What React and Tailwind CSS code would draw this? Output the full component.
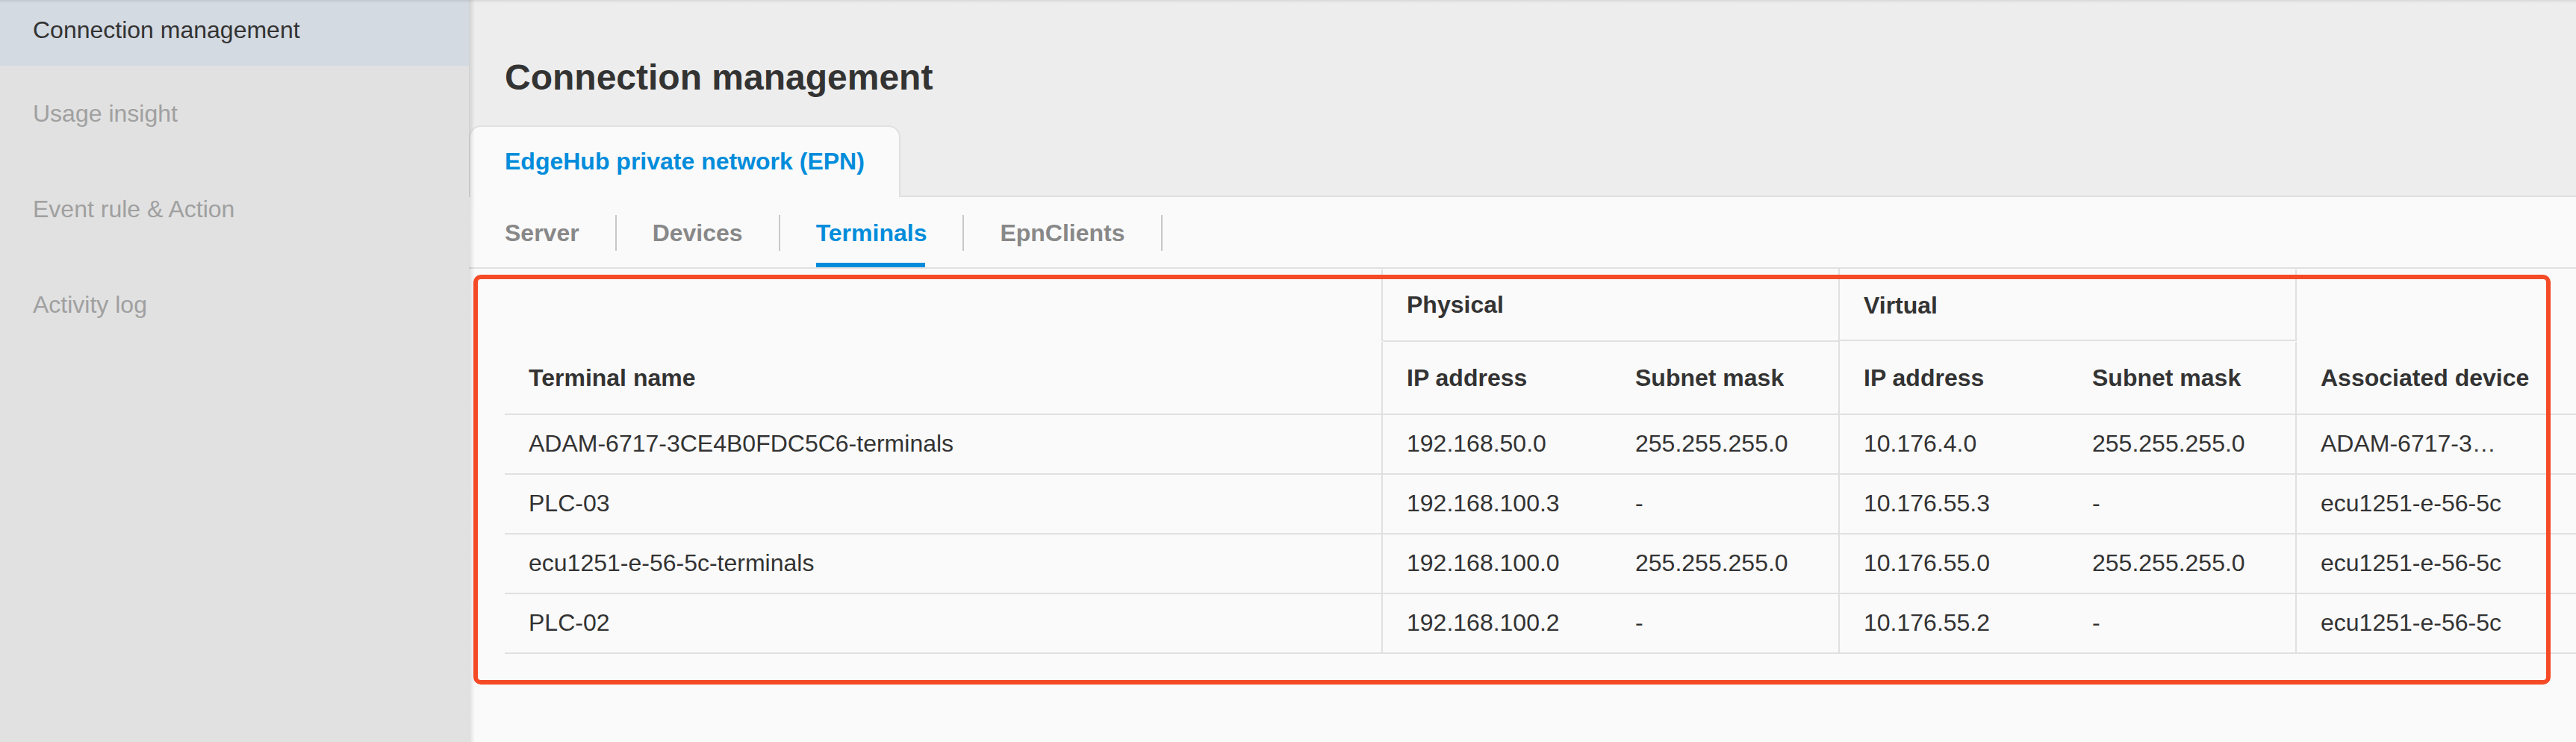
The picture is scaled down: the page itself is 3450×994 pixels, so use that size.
const navItems = [
	{ label: "Connection management", active: true },
	{ label: "Usage insight" },
	{ label: "Event rule & Action" },
	{ label: "Activity log" },
];

const subTabs = ["Server", "Devices", "Terminals", "EpnClients"];

const terminals = [
	{
		name: "ADAM-6717-3CE4B0FDC5C6-terminals",
		physical: ["192.168.50.0", "255.255.255.0"],
		virtual: ["10.176.4.0", "255.255.255.0"],
		device: "ADAM-6717-3…",
	},
	{
		name: "PLC-03",
		physical: ["192.168.100.3", "-"],
		virtual: ["10.176.55.3", "-"],
		device: "ecu1251-e-56-5c",
	},
	{
		name: "ecu1251-e-56-5c-terminals",
		physical: ["192.168.100.0", "255.255.255.0"],
		virtual: ["10.176.55.0", "255.255.255.0"],
		device: "ecu1251-e-56-5c",
	},
	{
		name: "PLC-02",
		physical: ["192.168.100.2", "-"],
		virtual: ["10.176.55.2", "-"],
		device: "ecu1251-e-56-5c",
	},
];

const GRID = "grid grid-cols-[1174px_307px_305px_307px_305px_1fr]";

const Sidebar = () => (
	<nav className="w-[628px] shrink-0 bg-[#e1e1e1]">
		{navItems.map((item) =>
			item.active ? (
				<div
					key={item.label}
					className="h-[88px] bg-[#d3dae2] pl-11 pt-1 leading-[72px] text-[#333333]"
				>
					{item.label}
				</div>
			) : (
				<div
					key={item.label}
					className="h-32 pl-11 leading-[128px] text-[#a0a0a0]"
				>
					{item.label}
				</div>
			),
		)}
	</nav>
);

const SubTabs = ({ current }) => (
	<div className="flex h-24 border-b-2 border-[#e0e0e0] pl-12">
		{subTabs.map((tab) => (
			<div key={tab} className="flex font-bold">
				<div
					className={`flex flex-col pt-2 leading-[80px] ${
						tab === current ? "text-[#008cdb]" : "text-[#888888]"
					}`}
				>
					{tab}
					{tab === current && <span className="h-1.5 w-[146px] bg-[#008cdb]" />}
				</div>
				<span className="mx-12 mt-6 h-12 w-0.5 bg-[#c8c8c8]" />
			</div>
		))}
	</div>
);

const TerminalTable = () => (
	<div className="pl-12 text-[#333333]">
		<div
			className={`${GRID} h-[196px] grid-rows-[98px_96px] border-b-2 border-[#e0e0e0] font-bold leading-[96px]`}
		>
			<div className="row-span-2 flex items-end pl-8">Terminal name</div>
			<div className="col-span-2 flex">
				<span className="mt-px h-24 w-0.5 bg-[#e0e0e0]" />
				<div className="flex-1 border-b-2 border-[#e0e0e0] pl-8">Physical</div>
			</div>
			<div className="col-span-2 border-l-2 border-[#e0e0e0]">
				<div className="h-[97px] border-b-2 border-[#e0e0e0] pl-8 leading-[98px]">
					Virtual
				</div>
			</div>
			<div className="row-span-2 flex">
				<div className="flex flex-col gap-px pt-px">
					<span className="h-24 w-0.5 bg-[#e0e0e0]" />
					<span className="h-24 w-0.5 bg-[#e0e0e0]" />
				</div>
				<div className="self-end pl-8">Associated device</div>
			</div>
			<div className="border-l-2 border-[#e0e0e0] pl-8">IP address</div>
			<div className="pl-[33px]">Subnet mask</div>
			<div className="border-l-2 border-[#e0e0e0] pl-8">IP address</div>
			<div className="pl-[33px]">Subnet mask</div>
		</div>

		{terminals.map((t) => (
			<div
				key={t.name}
				className={`${GRID} h-20 border-b-2 border-[#e0e0e0] leading-[76px]`}
			>
				<div className="pl-8">{t.name}</div>
				<div className="border-l-2 border-[#e0e0e0] pl-8">{t.physical[0]}</div>
				<div className="pl-[33px]">{t.physical[1]}</div>
				<div className="border-l-2 border-[#e0e0e0] pl-8">{t.virtual[0]}</div>
				<div className="pl-[33px]">{t.virtual[1]}</div>
				<div className="border-l-2 border-[#e0e0e0] pl-8">{t.device}</div>
			</div>
		))}
	</div>
);

export default function App() {
	return (
		<div className="relative flex h-[994px] w-[3450px] overflow-hidden whitespace-nowrap bg-[#fafafa] font-['Liberation_Sans',Arial,sans-serif] text-[32px]">
			<Sidebar />

			<main className="min-w-0 flex-1">
				<header className="flex h-[264px] flex-col bg-[#ededed]">
					<h1 className="h-[168px] pl-12 pt-[69px] text-[48px] font-bold leading-[69px] text-[#333333]">
						Connection management
					</h1>
					<div className="flex h-24">
						<div className="rounded-t-[16px] border-2 border-b-0 border-[#e0e0e0] bg-[#fafafa] px-[46px] font-bold leading-[92px] text-[#008cdb]">
							EdgeHub private network (EPN)
						</div>
						<div className="flex-1 border-b-2 border-[#e0e0e0]" />
					</div>
				</header>
				<SubTabs current="Terminals" />
				<TerminalTable />
			</main>

			{/* shadows cast by the top bar and the sidebar */}
			<div className="absolute left-0 top-0 h-1 w-full bg-linear-to-b from-black/9 to-transparent" />
			<div className="absolute left-[628px] top-0 h-full w-2 bg-linear-to-r from-black/12 to-transparent" />

			{/* highlight around the table */}
			<div className="absolute left-[634px] top-[368px] h-[549px] w-[2782px] rounded-[10px] border-6 border-[#f54a26]" />
		</div>
	);
}
